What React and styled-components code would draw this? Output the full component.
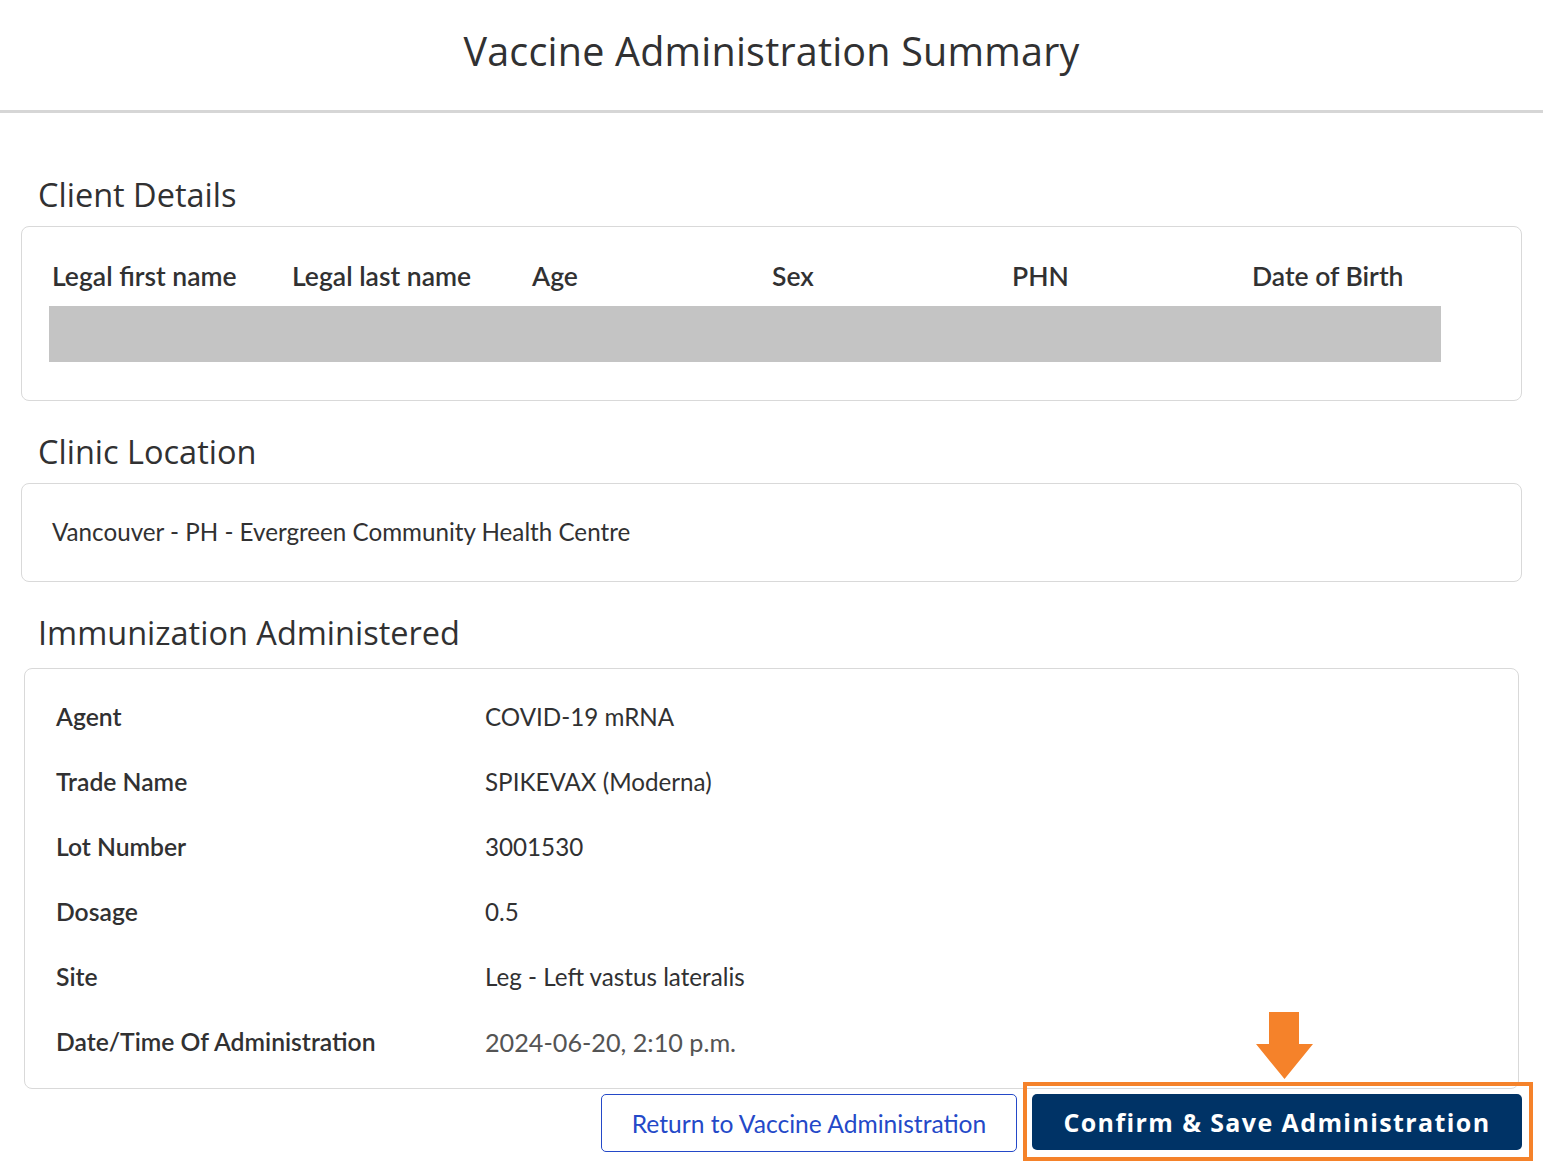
import React from 'react';
import styled, {createGlobalStyle} from 'styled-components';

const GlobalStyle = createGlobalStyle`
  body {
    margin: 0;
    background: #ffffff;
    font-family: Lato, 'Open Sans', sans-serif;
    color: #313132;
  }
`;

const Page = styled.div`
  width: 1543px;
  min-height: 1173px;
`;

const Header = styled.header`
  height: 113px;
  box-sizing: border-box;
  padding-bottom: 9px;
  display: flex;
  align-items: center;
  justify-content: center;
  border-bottom: 3px solid #d6d6d6;
`;

const Title = styled.h1`
  margin: 0;
  font-family: 'Open Sans', sans-serif;
  font-weight: 500;
  font-size: 39.5px;
  color: #313132;
  letter-spacing: 0.2px;
`;

const Content = styled.main`
  padding: 0 21px;
`;

const SectionTitle = styled.h2`
  margin: ${props => props.top}px 0 ${props => props.gap || 13}px 17px;
  font-family: 'Open Sans', sans-serif;
  font-weight: 400;
  font-size: 32.5px;
  line-height: 36px;
  color: #313132;
`;

const Panel = styled.section`
  border: 1px solid #d9d9d9;
  border-radius: 8px;
  margin: 0 ${props => props.inset || 0}px;
  padding: ${props => props.pad};
  box-sizing: border-box;
  height: ${props => props.h}px;
`;

const HeadRow = styled.div`
  display: grid;
  grid-template-columns: repeat(6, 240px);
  padding-left: 3px;
  margin-bottom: 15px;
`;

const HeadCell = styled.div`
  font-size: 26.5px;
  font-weight: 600;
  line-height: 30px;
  color: #313132;
`;

const RedactBar = styled.div`
  width: 1392px;
  height: 56px;
  background: #c4c4c4;
`;

const PlainText = styled.div`
  font-size: 24.2px;
  line-height: 30px;
  color: #313132;
`;

const InfoRow = styled.div`
  display: grid;
  grid-template-columns: 429px 1fr;
  height: 65px;
  align-items: center;
`;

const InfoLabel = styled.div`
  font-size: 24.7px;
  font-weight: 600;
  color: #313132;
`;

const InfoValue = styled.div`
  font-size: ${props => props.muted ? '25.2px' : '24.2px'};
  color: ${props => props.muted ? '#545454' : '#313132'};
`;

const Actions = styled.div`
  display: flex;
  justify-content: flex-end;
  align-items: flex-start;
  gap: 15px;
  margin-top: 5px;
`;

const SecondaryButton = styled.button`
  width: 416px;
  height: 58px;
  background: #ffffff;
  border: 1px solid #2449c8;
  border-radius: 5px;
  color: #2449c8;
  font-family: Lato, sans-serif;
  font-size: 24.6px;
`;

const PrimaryWrap = styled.div`
  position: relative;
`;

const PrimaryButton = styled.button`
  width: 490px;
  height: 56px;
  background: #003366;
  border: none;
  border-radius: 5px;
  color: #ffffff;
  font-family: 'Open Sans', sans-serif;
  font-weight: 700;
  font-size: 25px;
  letter-spacing: 1.4px;
`;

const Highlight = styled.div`
  position: absolute;
  top: -12px;
  left: -9px;
  right: -11px;
  bottom: -11px;
  border: 4px solid #f5822a;
  pointer-events: none;
`;

const Arrow = styled.svg`
  position: absolute;
  left: 224px;
  top: -82px;
`;

const clientCols = ['Legal first name', 'Legal last name', 'Age', 'Sex', 'PHN', 'Date of Birth'];

const immunization = [
  ['Agent', 'COVID-19 mRNA'],
  ['Trade Name', 'SPIKEVAX (Moderna)'],
  ['Lot Number', '3001530'],
  ['Dosage', '0.5'],
  ['Site', 'Leg - Left vastus lateralis'],
  ['Date/Time Of Administration', '2024-06-20, 2:10 p.m.', true]
];

export default function App() {
  return (
    <Page>
      <GlobalStyle />
      <Header>
        <Title>Vaccine Administration Summary</Title>
      </Header>
      <Content>
        <SectionTitle top={64}>Client Details</SectionTitle>
        <Panel h={175} pad="34px 27px 0">
          <HeadRow>
            {clientCols.map(c => (
              <HeadCell key={c}>{c}</HeadCell>
            ))}
          </HeadRow>
          <RedactBar />
        </Panel>

        <SectionTitle top={33}>Clinic Location</SectionTitle>
        <Panel h={99} pad="33px 30px 0">
          <PlainText>Vancouver - PH - Evergreen Community Health Centre</PlainText>
        </Panel>

        <SectionTitle top={33} gap={17}>Immunization Administered</SectionTitle>
        <Panel inset={3} h={421} pad="15px 31px 0">
          {immunization.map(([label, value, muted]) => (
            <InfoRow key={label}>
              <InfoLabel>{label}</InfoLabel>
              <InfoValue muted={muted}>{value}</InfoValue>
            </InfoRow>
          ))}
        </Panel>

        <Actions>
          <SecondaryButton>Return to Vaccine Administration</SecondaryButton>
          <PrimaryWrap>
            <PrimaryButton>Confirm &amp; Save Administration</PrimaryButton>
            <Highlight />
            <Arrow width="57" height="67" viewBox="0 0 57 67">
              <path d="M13 0 H43 V32 H57 L28.5 67 L0 32 H13 Z" fill="#f5822a" />
            </Arrow>
          </PrimaryWrap>
        </Actions>
      </Content>
    </Page>
  );
}
